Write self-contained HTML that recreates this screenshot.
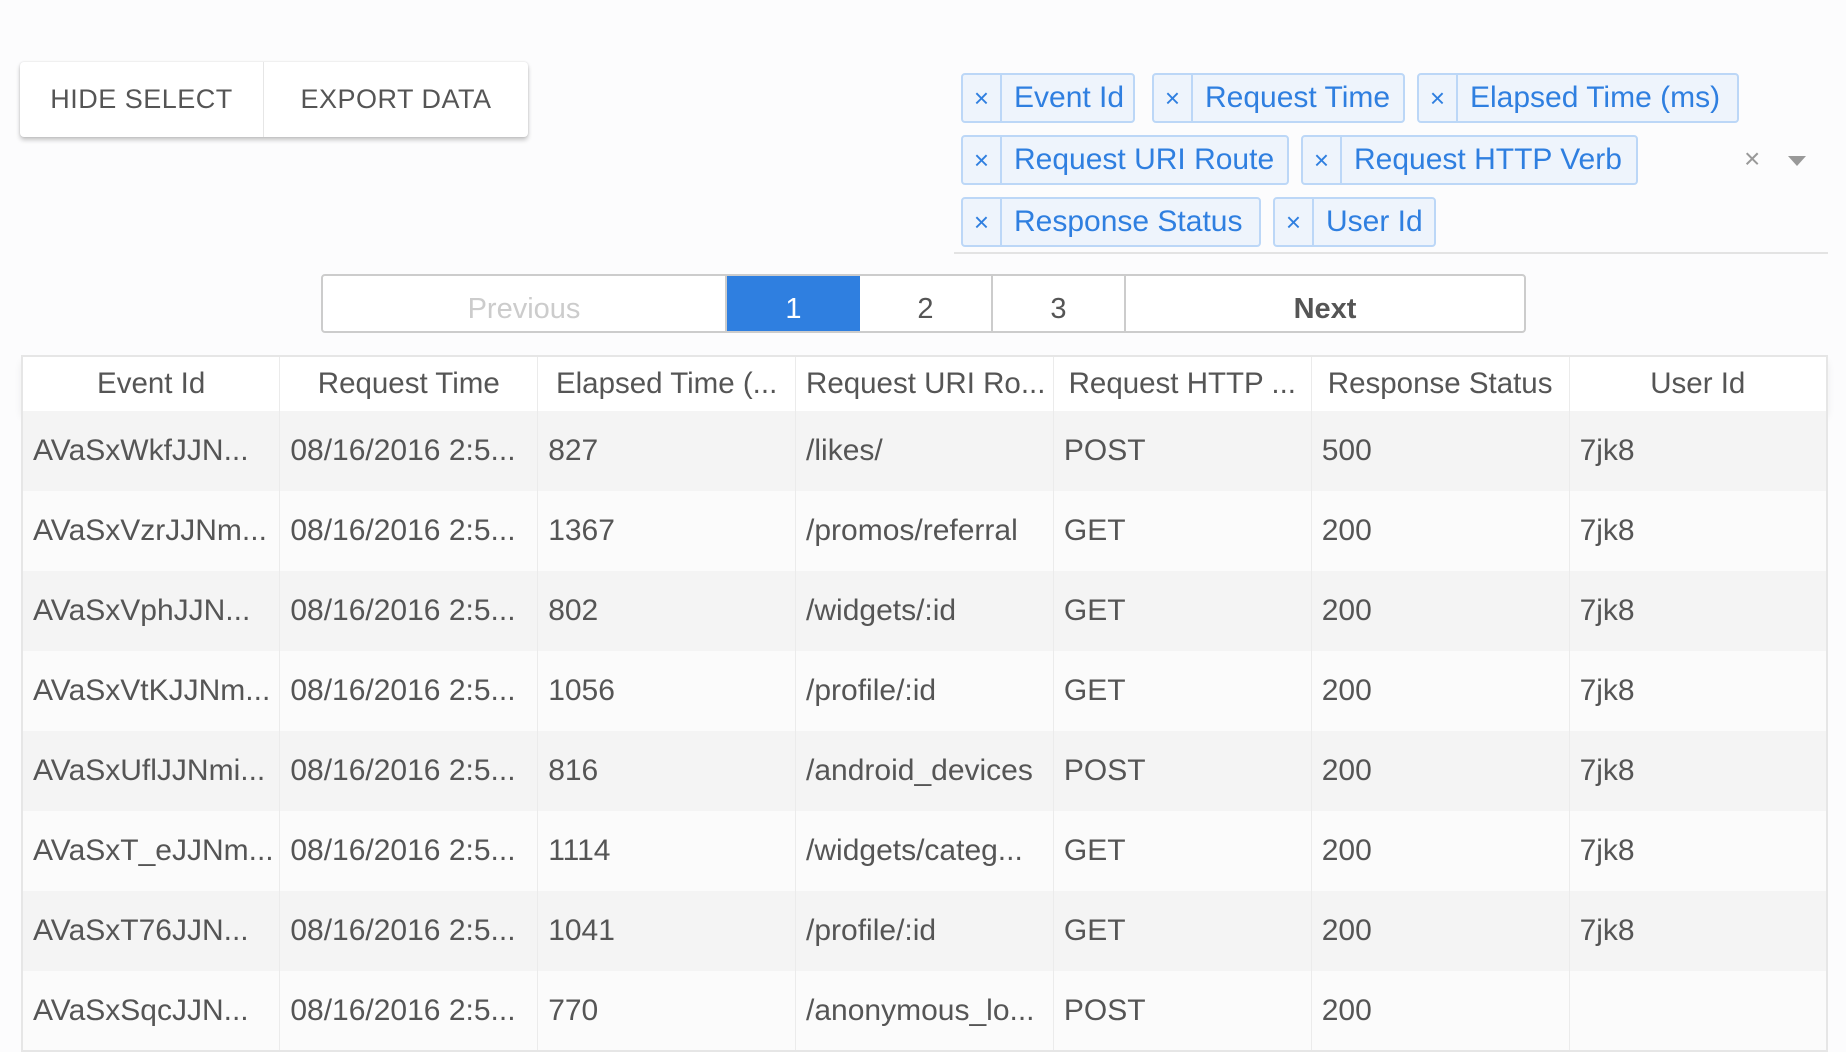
<!DOCTYPE html>
<html><head><meta charset="utf-8"><style>
*{box-sizing:border-box;margin:0;padding:0}
body{width:1846px;height:1050px;background:#fcfcfd;font-family:"Liberation Sans",sans-serif;color:#555;position:relative;overflow:hidden}
.btns{position:absolute;left:20px;top:62px;width:508px;height:75px;background:#fff;border-radius:4px;box-shadow:0 3px 5px rgba(0,0,0,.22),0 0 2px rgba(0,0,0,.12);display:flex}
.btns div{display:flex;align-items:center;justify-content:center;font-size:27px;letter-spacing:.5px;color:#555}
.b1{width:244px;border-right:1px solid #e6e6e6}.b2{flex:1}
.tag{position:absolute;height:50px;border:2px solid #bcd7f7;border-radius:4px;background:#eef4fc;color:#2f7fe0;font-size:30px;display:flex;align-items:center}
.tag .x{width:39px;height:100%;border-right:2px solid #bcd7f7;display:flex;align-items:center;justify-content:center;font-size:26px}
.tag .l{padding-left:12px;white-space:nowrap}
.line{position:absolute;left:954px;top:252px;width:874px;height:2px;background:#e3e3e3}
.pg{position:absolute;top:274px;height:59px;left:321px;width:1205px;border:2px solid #ccc;border-radius:4px;background:#fff;display:flex;overflow:hidden}
.pg div{display:flex;align-items:center;justify-content:center;font-size:29px;padding-top:12px;color:#555;border-right:2px solid #ccc}
table{position:absolute;left:21px;top:355px;width:1807px;border-collapse:collapse;table-layout:fixed;font-size:30px;border:2px solid #e6e6e6}
td,th{height:80px;padding:0 10px;white-space:nowrap;overflow:hidden;border-right:1px solid #ebebeb;font-weight:normal;text-align:left}
th{height:55px;text-align:center;background:#fff;font-size:29.5px}
thead tr{box-shadow:0 6px 8px rgba(0,0,0,.08)}
tbody tr:nth-child(odd){background:#f4f4f4}
tbody tr:nth-child(even){background:#fbfbfb}
</style></head><body>
<div class="btns"><div class="b1">HIDE SELECT</div><div class="b2">EXPORT DATA</div></div>

<div class="tag" style="left:961px;top:73px;width:174px"><div class="x">×</div><div class="l">Event Id</div></div>
<div class="tag" style="left:1152px;top:73px;width:253px"><div class="x">×</div><div class="l">Request Time</div></div>
<div class="tag" style="left:1417px;top:73px;width:322px"><div class="x">×</div><div class="l">Elapsed Time (ms)</div></div>
<div class="tag" style="left:961px;top:135px;width:328px"><div class="x">×</div><div class="l">Request URI Route</div></div>
<div class="tag" style="left:1301px;top:135px;width:337px"><div class="x">×</div><div class="l">Request HTTP Verb</div></div>
<div class="tag" style="left:961px;top:197px;width:300px"><div class="x">×</div><div class="l">Response Status</div></div>
<div class="tag" style="left:1273px;top:197px;width:163px"><div class="x">×</div><div class="l">User Id</div></div>
<div style="position:absolute;left:1744px;top:143px;font-size:28px;color:#999">×</div>
<div style="position:absolute;left:1788px;top:156px;width:0;height:0;border-left:9px solid transparent;border-right:9px solid transparent;border-top:10px solid #999"></div>
<div class="line"></div>

<div class="pg">
<div style="width:404px;color:#ccc">Previous</div>
<div style="width:133px;background:#2f7fe0;color:#fff;border-right:none">1</div>
<div style="width:133px">2</div>
<div style="width:133px">3</div>
<div style="flex:1;border-right:none;font-weight:bold">Next</div>
</div>

<table>
<colgroup><col><col><col><col><col><col><col></colgroup>
<thead><tr><th>Event Id</th><th>Request Time</th><th>Elapsed Time (...</th><th>Request URI Ro...</th><th>Request HTTP ...</th><th>Response Status</th><th>User Id</th></tr></thead>
<tbody>
<tr><td>AVaSxWkfJJN...</td><td>08/16/2016 2:5...</td><td>827</td><td>/likes/</td><td>POST</td><td>500</td><td>7jk8</td></tr>
<tr><td>AVaSxVzrJJNm...</td><td>08/16/2016 2:5...</td><td>1367</td><td>/promos/referral</td><td>GET</td><td>200</td><td>7jk8</td></tr>
<tr><td>AVaSxVphJJN...</td><td>08/16/2016 2:5...</td><td>802</td><td>/widgets/:id</td><td>GET</td><td>200</td><td>7jk8</td></tr>
<tr><td>AVaSxVtKJJNm...</td><td>08/16/2016 2:5...</td><td>1056</td><td>/profile/:id</td><td>GET</td><td>200</td><td>7jk8</td></tr>
<tr><td>AVaSxUflJJNmi...</td><td>08/16/2016 2:5...</td><td>816</td><td>/android_devices</td><td>POST</td><td>200</td><td>7jk8</td></tr>
<tr><td>AVaSxT_eJJNm...</td><td>08/16/2016 2:5...</td><td>1114</td><td>/widgets/categ...</td><td>GET</td><td>200</td><td>7jk8</td></tr>
<tr><td>AVaSxT76JJN...</td><td>08/16/2016 2:5...</td><td>1041</td><td>/profile/:id</td><td>GET</td><td>200</td><td>7jk8</td></tr>
<tr><td>AVaSxSqcJJN...</td><td>08/16/2016 2:5...</td><td>770</td><td>/anonymous_lo...</td><td>POST</td><td>200</td><td></td></tr>
</tbody></table>
</body></html>
